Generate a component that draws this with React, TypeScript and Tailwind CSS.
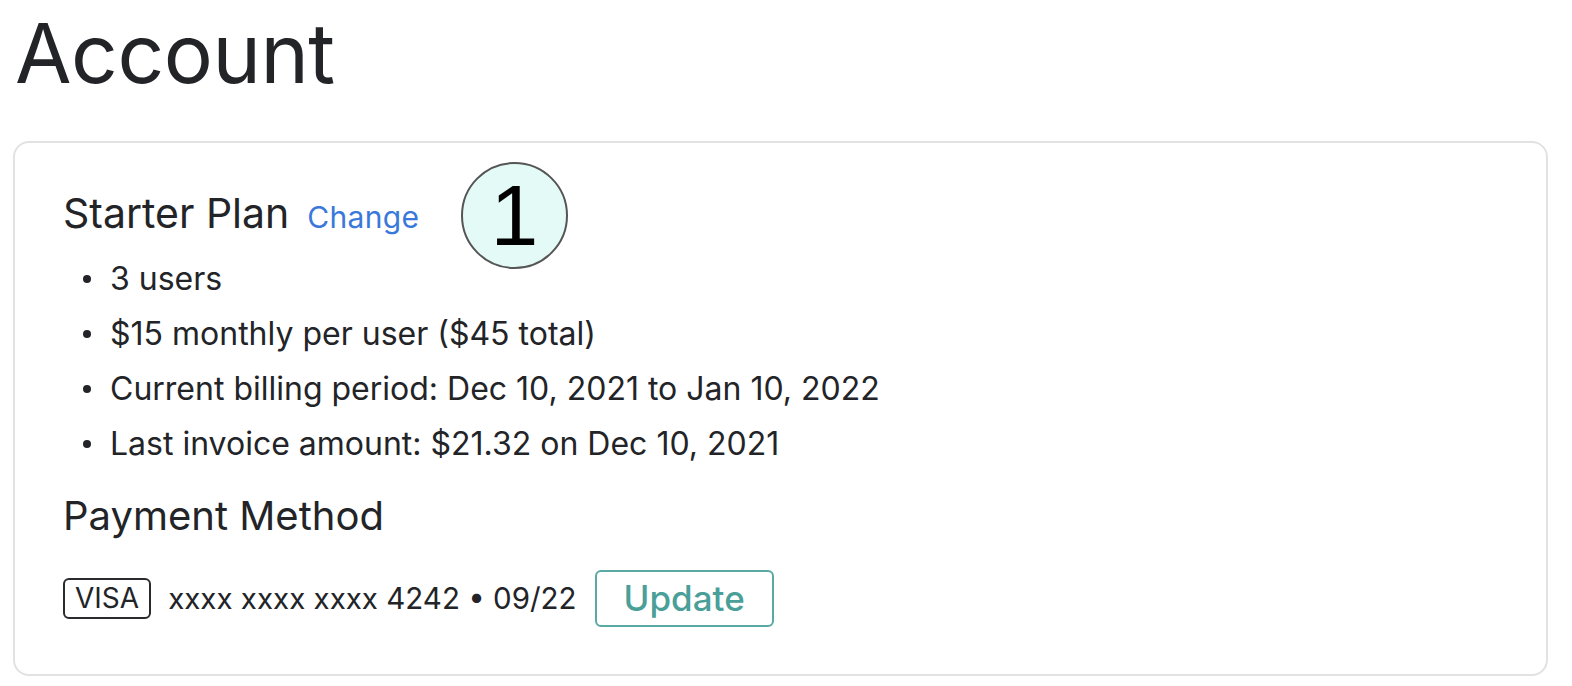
import React from 'react';

const items = [
  '3 users',
  '$15 monthly per user ($45 total)',
  'Current billing period: Dec 10, 2021 to Jan 10, 2022',
  'Last invoice amount: $21.32 on Dec 10, 2021',
];

const App = () => {
  return (
    <div
      className="min-h-[686px] w-[1572px] bg-white text-[#222428]"
      style={{ fontFamily: 'Inter, "Noto Sans", sans-serif' }}
    >
      <h1 className="pl-[15px] pt-[4px] text-[82px] font-normal leading-[100px] tracking-[-0.5px]">Account</h1>

      <div className="relative ml-[13px] mt-[37px] w-[1535px] rounded-[16px] border-2 border-[#e2e2e4] pb-[47px] pl-[48px] pt-[40px]">
        <div className="flex items-baseline gap-[18px]">
          <h2 className="text-[41px] font-normal leading-[60px]">Starter Plan</h2>
          <a className="text-[30px] tracking-[0.3px] text-[#3a78db]">Change</a>
        </div>

        <ul className="mt-[17px] flex flex-col gap-[17px] pl-[20px] text-[32px] leading-[38px]">
          {items.map((t) => (
            <li key={t} className="flex items-center gap-[19px]">
              <span className="h-[8px] w-[8px] rounded-full bg-[#222428]" />
              <span>{t}</span>
            </li>
          ))}
        </ul>

        <h2 className="mt-[23px] text-[40px] font-normal leading-[60px]">Payment Method</h2>

        <div className="mt-[24px] flex items-center">
          <span className="rounded-[6px] border-2 border-[#2a2b2e] px-[10px] text-[28px] leading-[37px]">VISA</span>
          <span className="ml-[17px] text-[29.5px]">xxxx xxxx xxxx 4242 • 09/22</span>
          <button className="ml-[18px] h-[57px] w-[179px] rounded-[6px] border-2 border-[#5aa9a3] text-[35px] font-medium text-[#4a9f99]">
            Update
          </button>
        </div>

        <div
          className="absolute left-[446px] top-[19px] flex h-[107px] w-[107px] items-center justify-center rounded-full border-2 border-[#555] bg-[#e3faf6] text-[86px] text-black"
          style={{ fontFamily: '"Liberation Sans", Arial, sans-serif' }}
        >
          1
        </div>
      </div>
    </div>
  );
};

export default App;
